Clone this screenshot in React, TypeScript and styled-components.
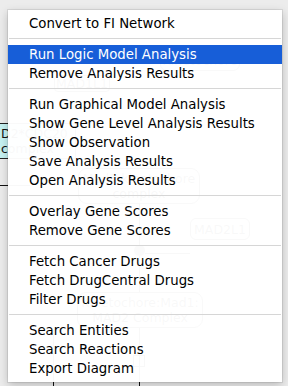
import React from "react";
import styled, { createGlobalStyle } from "styled-components";

const GlobalStyle = createGlobalStyle`
  html, body {
    margin: 0;
    padding: 0;
    background: #ececec;
    overflow: hidden;
  }
`;

type Entry = { label: string; active?: boolean } | "sep";

const entries: Entry[] = [
  { label: "Convert to FI Network" },
  "sep",
  { label: "Run Logic Model Analysis", active: true },
  { label: "Remove Analysis Results" },
  "sep",
  { label: "Run Graphical Model Analysis" },
  { label: "Show Gene Level Analysis Results" },
  { label: "Show Observation" },
  { label: "Save Analysis Results" },
  { label: "Open Analysis Results" },
  "sep",
  { label: "Overlay Gene Scores" },
  { label: "Remove Gene Scores" },
  "sep",
  { label: "Fetch Cancer Drugs" },
  { label: "Fetch DrugCentral Drugs" },
  { label: "Filter Drugs" },
  "sep",
  { label: "Search Entities" },
  { label: "Search Reactions" },
  { label: "Export Diagram" },
];

const App: React.FC = () => {
  return (
    <StyledCanvas>
      <GlobalStyle />

      {/* pathway diagram lying behind the popup */}
      <StyledNode $x={-20} $y={123} $w={96} $h={36} $bg="#c6f2f2" $left>
        D2*CDC20
        <br />
        complex
      </StyledNode>
      <StyledEdge $x={-10} $y={185} $w={40} $h={1} />
      <StyledNode $x={160} $y={49} $w={80} $h={22} $radius={7}>
        Kinetochore
      </StyledNode>
      <StyledNode $x={54} $y={75} $w={56} $h={17} $radius={4}>
        MAD1L1
      </StyledNode>
      <StyledNode $x={78} $y={168} $w={122} $h={36} $radius={9}>
        Mad1:kinetochore
        <br />
        complex
      </StyledNode>
      <StyledNode $x={190} $y={218} $w={60} $h={22} $radius={6}>
        MAD2L1
      </StyledNode>
      <StyledEdge $x={139} $y={204} $w={1} $h={46} />
      <StyledEdge $x={145} $y={253} $w={45} $h={1} />
      <StyledDot $x={134} $y={245} />
      <StyledEdge $x={139} $y={256} $w={1} $h={36} />
      <StyledNode $x={77} $y={292} $w={126} $h={36} $radius={9}>
        Kinetochore:Mad1:
        <br />
        MAD2 Complex
      </StyledNode>
      <StyledEdge $x={139} $y={328} $w={1} $h={60} />
      <StyledEdge $x={53} $y={330} $w={1} $h={60} />
      <StyledEdge $x={133} $y={355} $w={12} $h={12} $box />

      <StyledMenu>
        {entries.map((entry, i) =>
          entry === "sep" ? (
            <StyledSeparator key={i} />
          ) : (
            <StyledItem key={i} $active={entry.active}>
              {entry.label}
            </StyledItem>
          )
        )}
      </StyledMenu>
    </StyledCanvas>
  );
};

export default App;

const StyledCanvas = styled.div`
  position: relative;
  width: 288px;
  height: 386px;
  overflow: hidden;
  background: #ececec;
  font-family: "DejaVu Sans", "Liberation Sans", sans-serif;
`;

const StyledNode = styled.div<{
  $x: number;
  $y: number;
  $w: number;
  $h: number;
  $bg?: string;
  $radius?: number;
  $left?: boolean;
}>`
  position: absolute;
  left: ${(p) => p.$x}px;
  top: ${(p) => p.$y}px;
  width: ${(p) => p.$w}px;
  height: ${(p) => p.$h}px;
  box-sizing: border-box;
  border: 1px solid #222;
  border-radius: ${(p) => p.$radius ?? 0}px;
  background: ${(p) => p.$bg ?? "#ffffff"};
  color: #111;
  font-size: 12.5px;
  line-height: 15px;
  display: flex;
  flex-direction: column;
  justify-content: center;
  align-items: ${(p) => (p.$left ? "flex-start" : "center")};
  padding-left: ${(p) => (p.$left ? 20 : 0)}px;
  text-align: ${(p) => (p.$left ? "left" : "center")};
  white-space: nowrap;
`;

const StyledEdge = styled.div<{
  $x: number;
  $y: number;
  $w: number;
  $h: number;
  $box?: boolean;
}>`
  position: absolute;
  left: ${(p) => p.$x}px;
  top: ${(p) => p.$y}px;
  width: ${(p) => p.$w}px;
  height: ${(p) => p.$h}px;
  box-sizing: border-box;
  background: ${(p) => (p.$box ? "transparent" : "#111")};
  border: ${(p) => (p.$box ? "1px solid #111" : "none")};
`;

const StyledDot = styled.div<{ $x: number; $y: number }>`
  position: absolute;
  left: ${(p) => p.$x}px;
  top: ${(p) => p.$y}px;
  width: 11px;
  height: 11px;
  border-radius: 50%;
  background: #555;
`;

const StyledMenu = styled.div`
  position: absolute;
  left: 8px;
  top: 10px;
  width: 274px;
  padding: 4px 0;
  background: rgba(255, 255, 255, 0.972);
  box-shadow: 0 0 0 1px rgba(0, 0, 0, 0.08), 0 3px 9px rgba(0, 0, 0, 0.22);
  display: flex;
  flex-direction: column;
`;

const StyledItem = styled.div<{ $active?: boolean }>`
  height: 19px;
  box-sizing: border-box;
  padding: 1px 0 0 21px;
  line-height: 18px;
  font-size: 13.3px;
  white-space: nowrap;
  color: ${(p) => (p.$active ? "#ffffff" : "#000000")};
  background: ${(p) => (p.$active ? "#175ed8" : "transparent")};
`;

const StyledSeparator = styled.div`
  height: 12px;
  box-sizing: border-box;
  padding: 5px 1px 0;

  &::after {
    content: "";
    display: block;
    height: 1px;
    background: #d6d6d6;
  }
`;
